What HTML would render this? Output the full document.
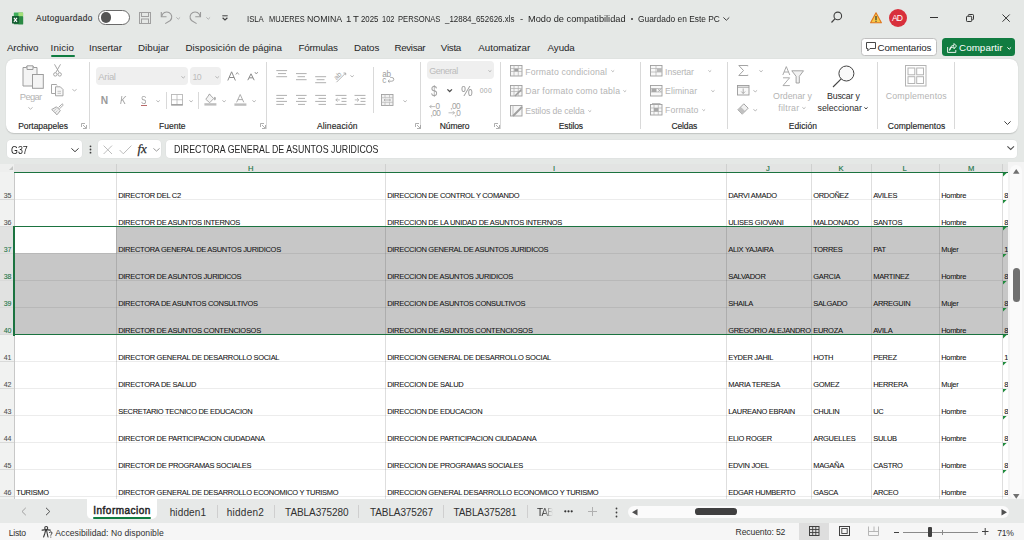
<!DOCTYPE html>
<html><head><meta charset="utf-8"><style>
html,body{margin:0;padding:0;width:1024px;height:540px;overflow:hidden;position:relative;font-family:'Liberation Sans',sans-serif;background:#e5e8e6;}
.t{position:absolute;white-space:nowrap;}
.a{position:absolute;}

.rib{position:absolute;left:6px;top:58.5px;width:1012px;height:74.5px;background:#fff;border-radius:8px;box-shadow:0 0.6px 1.2px rgba(0,0,0,0.16);}
.sep{position:absolute;width:1px;background:#d9d9d9;}
.box{position:absolute;background:#fff;border-radius:4px;box-shadow:0 0 0 0.5px #dcdedd;}
.hl{position:absolute;height:1px;background:rgba(0,0,0,0.075);}
.vl{position:absolute;width:1px;background:rgba(0,0,0,0.13);}
svg{position:absolute;overflow:visible;}

</style></head><body>
<div class="rib"></div>
<div class="sep" style="left:89.0px;top:62px;height:67px"></div>
<div class="sep" style="left:266.0px;top:62px;height:67px"></div>
<div class="sep" style="left:420.0px;top:62px;height:67px"></div>
<div class="sep" style="left:500.0px;top:62px;height:67px"></div>
<div class="sep" style="left:640.0px;top:62px;height:67px"></div>
<div class="sep" style="left:727.0px;top:62px;height:67px"></div>
<div class="sep" style="left:877.0px;top:62px;height:67px"></div>
<div class="sep" style="left:954.0px;top:62px;height:67px"></div>
<div class="sep" style="left:166.0px;top:92px;height:17px"></div>
<div class="sep" style="left:198.0px;top:92px;height:17px"></div>
<div class="sep" style="left:373.0px;top:67px;height:46px"></div>
<div class="box" style="left:7px;top:140px;width:75px;height:18px"></div>
<div class="box" style="left:98px;top:140px;width:63px;height:18px"></div>
<div class="box" style="left:166px;top:140px;width:851px;height:18px"></div>
<div class="a" style="left:14px;top:164px;width:994px;height:8px;background:#e3e4e3"></div>
<div class="a" style="left:0;top:164px;width:14px;height:8px;background:#eeefee"></div>
<div class="a" style="left:116px;top:164px;width:1px;height:8px;background:#cfd0cf"></div>
<div class="a" style="left:385px;top:164px;width:1px;height:8px;background:#cfd0cf"></div>
<div class="a" style="left:726px;top:164px;width:1px;height:8px;background:#cfd0cf"></div>
<div class="a" style="left:811px;top:164px;width:1px;height:8px;background:#cfd0cf"></div>
<div class="a" style="left:871px;top:164px;width:1px;height:8px;background:#cfd0cf"></div>
<div class="a" style="left:939px;top:164px;width:1px;height:8px;background:#cfd0cf"></div>
<div class="a" style="left:1002px;top:164px;width:1px;height:8px;background:#cfd0cf"></div>
<div class="a" style="left:0;top:172px;width:14px;height:327px;background:#f1f2f1"></div>
<div class="a" style="left:14px;top:172px;width:994px;height:327px;background:#fff;overflow:hidden" id="grid">
<div class="a" style="left:0;top:54px;width:994px;height:108px;background:#c7c7c7"></div>
<div class="a" style="left:0;top:54px;width:102px;height:27px;background:#fff"></div>
<div class="hl" style="left:0;top:27px;width:994px"></div>
<div class="hl" style="left:0;top:54px;width:994px"></div>
<div class="hl" style="left:0;top:81px;width:994px"></div>
<div class="hl" style="left:0;top:108px;width:994px"></div>
<div class="hl" style="left:0;top:135px;width:994px"></div>
<div class="hl" style="left:0;top:162px;width:994px"></div>
<div class="hl" style="left:0;top:189px;width:994px"></div>
<div class="hl" style="left:0;top:216px;width:994px"></div>
<div class="hl" style="left:0;top:243px;width:994px"></div>
<div class="hl" style="left:0;top:270px;width:994px"></div>
<div class="hl" style="left:0;top:297px;width:994px"></div>
<div class="hl" style="left:0;top:324px;width:994px"></div>
<div class="vl" style="left:102px;top:0;height:327px"></div>
<div class="vl" style="left:371px;top:0;height:327px"></div>
<div class="vl" style="left:712px;top:0;height:327px"></div>
<div class="vl" style="left:797px;top:0;height:327px"></div>
<div class="vl" style="left:857px;top:0;height:327px"></div>
<div class="vl" style="left:925px;top:0;height:327px"></div>
<div class="vl" style="left:988px;top:0;height:327px"></div>
</div>
<div class="a" style="left:0;top:226px;width:14px;height:108px;background:#e1e2e1"></div>
<div class="a" style="left:0;top:199px;width:14px;height:1px;background:#d9dad9"></div>
<div class="a" style="left:0;top:226px;width:14px;height:1px;background:#d9dad9"></div>
<div class="a" style="left:0;top:253px;width:14px;height:1px;background:#d9dad9"></div>
<div class="a" style="left:0;top:280px;width:14px;height:1px;background:#d9dad9"></div>
<div class="a" style="left:0;top:307px;width:14px;height:1px;background:#d9dad9"></div>
<div class="a" style="left:0;top:334px;width:14px;height:1px;background:#d9dad9"></div>
<div class="a" style="left:0;top:361px;width:14px;height:1px;background:#d9dad9"></div>
<div class="a" style="left:0;top:388px;width:14px;height:1px;background:#d9dad9"></div>
<div class="a" style="left:0;top:415px;width:14px;height:1px;background:#d9dad9"></div>
<div class="a" style="left:0;top:442px;width:14px;height:1px;background:#d9dad9"></div>
<div class="a" style="left:0;top:469px;width:14px;height:1px;background:#d9dad9"></div>
<div class="a" style="left:0;top:496px;width:14px;height:1px;background:#d9dad9"></div>
<div class="a" style="left:14px;top:172px;width:1px;height:327px;background:#c8c8c8"></div>
<div class="a" style="left:14px;top:171.5px;width:994px;height:1.6px;background:#1b7340"></div>
<div class="a" style="left:13px;top:225.6px;width:995px;height:1.8px;background:#1b7340"></div>
<div class="a" style="left:13px;top:333.6px;width:995px;height:1.8px;background:#1b7340"></div>
<div class="a" style="left:13px;top:225.6px;width:2px;height:110px;background:#1b7340"></div>
<div class="a" style="left:1008px;top:162px;width:16px;height:338px;background:#f4f4f4"></div>
<div class="a" style="left:1010px;top:165px;width:12px;height:334px;background:#fafafa;border-radius:6px"></div>
<div class="a" style="left:1013px;top:267.5px;width:6.5px;height:34.5px;background:#707070;border-radius:3.5px"></div>
<div class="a" style="left:0;top:499px;width:1024px;height:23.5px;background:#e7e9e8"></div>
<div class="a" style="left:86.5px;top:499px;width:70px;height:20px;background:#fff;border-radius:0 0 5px 5px"></div>
<div class="a" style="left:93px;top:517px;width:57.5px;height:1.6px;background:#107c41;border-radius:1px"></div>
<div class="a" style="left:216.5px;top:505px;width:1px;height:13px;background:#cfcfcf"></div>
<div class="a" style="left:274.3px;top:505px;width:1px;height:13px;background:#cfcfcf"></div>
<div class="a" style="left:358.4px;top:505px;width:1px;height:13px;background:#cfcfcf"></div>
<div class="a" style="left:443.3px;top:505px;width:1px;height:13px;background:#cfcfcf"></div>
<div class="a" style="left:526.6px;top:505px;width:1px;height:13px;background:#cfcfcf"></div>
<div class="a" style="left:628.4px;top:505.8px;width:380.5px;height:12.5px;background:#fbfbfb;border-radius:6px"></div>
<div class="a" style="left:694.8px;top:508.4px;width:42.7px;height:6.2px;background:#404040;border-radius:3.1px"></div>
<div class="a" style="left:0;top:522.5px;width:1024px;height:17.5px;background:#f6f6f6"></div>
<div class="a" style="left:799.2px;top:522.5px;width:29.8px;height:17.5px;background:#dedede"></div>
<svg style="left:11px;top:11.5px;" width="13" height="13" viewBox="0 0 13 13"><rect x="2.8" y="0.5" width="9.3" height="4.2" rx="0.6" fill="#3fae5c"/><rect x="7.4" y="0.5" width="4.7" height="4.2" fill="#a3df79"/><rect x="2.8" y="4.5" width="9.3" height="7.8" rx="0.6" fill="#1f7d3b"/><rect x="7.4" y="4.5" width="4.7" height="7.8" fill="#2a8a44"/><rect x="1" y="4.1" width="6.9" height="7.5" rx="0.5" fill="#155c33"/><path d="M2.9 5.9 L6 9.8 M6 5.9 L2.9 9.8" stroke="#fff" stroke-width="1.1"/></svg>
<div class="a" style="left:98px;top:10px;width:30px;height:13px;border:1px solid #6a6a6a;border-radius:8px;background:#fff"></div>
<div class="a" style="left:100.5px;top:12px;width:10.6px;height:10.6px;border-radius:50%;background:#555"></div>
<svg style="left:139px;top:12px;" width="12" height="12" viewBox="0 0 12 12"><rect x="0.5" y="0.5" width="11" height="11" fill="none" stroke="#a0a0a0" stroke-width="1"/><rect x="2.5" y="0.5" width="7" height="4" fill="none" stroke="#a0a0a0"/><rect x="2.5" y="7" width="7" height="4.5" fill="none" stroke="#a0a0a0"/></svg>
<svg style="left:160px;top:11px;" width="13" height="14" viewBox="0 0 13 14"><path d="M1.3 1.1 V5.8 H6.5" fill="none" stroke="#9a9a9a" stroke-width="1.1"/><path d="M1.8 5.3 A5 5 0 1 1 10.3 9.5 L5.2 12.6" fill="none" stroke="#9a9a9a" stroke-width="1.1"/></svg>
<svg style="left:176.3px;top:16.5px;" width="4.5" height="2.5" viewBox="0 0 4.5 2.5"><path d="M0.4 0.4 L2.25 2.2 L4.1 0.4" fill="none" stroke="#a8a8a8" stroke-width="0.9"/></svg>
<svg style="left:189px;top:11px;" width="13" height="14" viewBox="0 0 13 14"><path d="M11.5 1.1 V5.8 H6.3" fill="none" stroke="#9a9a9a" stroke-width="1.1"/><path d="M11 5.3 A5 5 0 1 0 2.5 9.5 L7.6 12.6" fill="none" stroke="#9a9a9a" stroke-width="1.1"/></svg>
<svg style="left:206px;top:16.5px;" width="4.5" height="2.5" viewBox="0 0 4.5 2.5"><path d="M0.4 0.4 L2.25 2.2 L4.1 0.4" fill="none" stroke="#a8a8a8" stroke-width="0.9"/></svg>
<svg style="left:221.8px;top:14.5px;" width="6" height="6" viewBox="0 0 6 6"><path d="M0.3 0.8 H5.7" stroke="#404040" stroke-width="1"/><path d="M0.6 2.8 L3 5 L5.4 2.8" fill="none" stroke="#404040" stroke-width="1.2"/></svg>
<svg style="left:723.4px;top:16.5px;" width="6.7" height="3.6" viewBox="0 0 6.7 3.6"><path d="M0.4 0.4 L3.35 3.3000000000000003 L6.3 0.4" fill="none" stroke="#404040" stroke-width="1"/></svg>
<svg style="left:830px;top:11px;" width="13" height="13" viewBox="0 0 13 13"><circle cx="7.8" cy="4.9" r="3.8" fill="none" stroke="#404040" stroke-width="1.1"/><path d="M5.1 7.7 L1.5 11.5" stroke="#404040" stroke-width="1.2"/></svg>
<svg style="left:870px;top:12px;" width="12" height="11.5" viewBox="0 0 12 11.5"><path d="M6 0.8 L11.4 10.7 H0.6 Z" fill="#f7c948" stroke="#e0761d" stroke-width="1.1" stroke-linejoin="round"/><rect x="5.4" y="4" width="1.2" height="4" fill="#333"/><rect x="5.4" y="8.7" width="1.2" height="1.1" fill="#333"/></svg>
<div class="a" style="left:888.9px;top:8.9px;width:18.4px;height:18.4px;border-radius:50%;background:#d8303c"></div>
<div class="a" style="left:930.3px;top:17px;width:7.5px;height:1px;background:#333"></div>
<svg style="left:966px;top:14px;" width="8" height="8" viewBox="0 0 8 8"><rect x="0.5" y="2.3" width="5.2" height="5.2" rx="0.8" fill="none" stroke="#333" stroke-width="1"/><path d="M2.3 1.8 V1.3 Q2.3 0.5 3.1 0.5 H6.7 Q7.5 0.5 7.5 1.3 V4.9 Q7.5 5.7 6.7 5.7 H6.2" fill="none" stroke="#333" stroke-width="1"/></svg>
<svg style="left:1002px;top:13.6px;" width="8.2" height="8.2" viewBox="0 0 8.2 8.2"><path d="M0.5 0.5 L7.7 7.7 M7.7 0.5 L0.5 7.7" stroke="#333" stroke-width="1"/></svg>
<div class="a" style="left:50.5px;top:54.5px;width:24px;height:2px;background:#107c41;border-radius:1px"></div>
<div class="a" style="left:860.5px;top:38.2px;width:74px;height:16.3px;background:#fff;border:0.8px solid #c0c0c0;border-radius:3.5px"></div>
<svg style="left:865.5px;top:42px;" width="11" height="10" viewBox="0 0 11 10"><path d="M0.5 0.5 H9.5 V6.5 H4 L1.8 8.8 V6.5 H0.5 Z" fill="none" stroke="#333" stroke-width="0.9" stroke-linejoin="round"/></svg>
<div class="a" style="left:942.3px;top:38px;width:72.5px;height:18px;background:#117c41;border-radius:3.5px"></div>
<svg style="left:947px;top:42.5px;" width="10" height="10" viewBox="0 0 10 10"><path d="M0.6 4 V9.4 H8.8 V7" fill="none" stroke="#fff" stroke-width="0.9"/><path d="M2.6 7.4 Q3.2 3.8 7 3.8 V5.8 L9.5 3 L7 0.5 V2.3 Q2.9 2.5 2.6 7.4" fill="none" stroke="#fff" stroke-width="0.9" stroke-linejoin="round"/></svg>
<svg style="left:1006.5px;top:47px;" width="4.5" height="2.5" viewBox="0 0 4.5 2.5"><path d="M0.4 0.4 L2.25 2.2 L4.1 0.4" fill="none" stroke="#fff" stroke-width="1"/></svg>
<svg style="left:22px;top:64.5px;" width="22" height="24" viewBox="0 0 22 24"><path d="M1 2.5 H4.5 V1.5 H11.5 V2.5 H15 V21 H1 Z" fill="#f4f4f4" stroke="#9c9c9c" stroke-width="1"/><path d="M5 0.8 H11 V4.5 H5 Z" fill="#f4f4f4" stroke="#9c9c9c" stroke-width="1"/><rect x="10.5" y="9.5" width="10.8" height="13.8" fill="#f4f4f4" stroke="#9c9c9c" stroke-width="1"/></svg>
<svg style="left:27.8px;top:107px;" width="5" height="2.5" viewBox="0 0 5 2.5"><path d="M0.4 0.4 L2.5 2.2 L4.6 0.4" fill="none" stroke="#b0b0b0" stroke-width="0.9"/></svg>
<svg style="left:52.5px;top:64.3px;" width="9" height="12.5" viewBox="0 0 9 12.5"><path d="M1.5 0.3 L6.2 8.5 M7.5 0.3 L2.8 8.5" stroke="#9c9c9c" stroke-width="0.9"/><circle cx="2.3" cy="10.4" r="1.7" fill="none" stroke="#9c9c9c" stroke-width="0.9"/><circle cx="6.7" cy="10.4" r="1.7" fill="none" stroke="#9c9c9c" stroke-width="0.9"/></svg>
<svg style="left:50.7px;top:83.7px;" width="13" height="12.5" viewBox="0 0 13 12.5"><path d="M4 9.5 H0.5 V0.5 H5.5 L6 1.5" fill="none" stroke="#9c9c9c" stroke-width="0.9"/><path d="M4.5 2.8 H9.3 L12 5.5 V11.8 H4.5 Z" fill="#f7f7f7" stroke="#9c9c9c" stroke-width="0.9"/><path d="M6.5 7.3 H10 M6.5 9.3 H10" stroke="#b4b4b4" stroke-width="0.8"/></svg>
<svg style="left:72.2px;top:89px;" width="5" height="2.2" viewBox="0 0 5 2.2"><path d="M0.4 0.4 L2.5 1.9000000000000001 L4.6 0.4" fill="none" stroke="#b0b0b0" stroke-width="0.9"/></svg>
<svg style="left:51px;top:102.8px;" width="12.5" height="12.5" viewBox="0 0 12.5 12.5"><path d="M7.5 4.5 L10.6 1.4 Q11.6 0.6 12 1.5 Q12.2 2.1 11.5 2.8 L8.5 5.8" fill="none" stroke="#9c9c9c" stroke-width="0.9"/><path d="M5.5 3.8 L9.3 7.6 L6 11.8 L0.7 6.5 Z" fill="#f0f0f0" stroke="#9c9c9c" stroke-width="0.9" stroke-linejoin="round"/><path d="M2.5 8.3 L5.5 5.5 M4 10 L6.5 7.5" stroke="#b4b4b4" stroke-width="0.7"/></svg>
<svg style="left:81px;top:123.3px;" width="6" height="6" viewBox="0 0 6 6"><path d="M0.5 4 V0.5 H4" fill="none" stroke="#9a9a9a" stroke-width="0.8"/><path d="M5.5 2 V5.5 H2 M2 2 L5 5" fill="none" stroke="#9a9a9a" stroke-width="0.8"/></svg>
<svg style="left:260px;top:123.3px;" width="6" height="6" viewBox="0 0 6 6"><path d="M0.5 4 V0.5 H4" fill="none" stroke="#9a9a9a" stroke-width="0.8"/><path d="M5.5 2 V5.5 H2 M2 2 L5 5" fill="none" stroke="#9a9a9a" stroke-width="0.8"/></svg>
<svg style="left:414.6px;top:123.3px;" width="6" height="6" viewBox="0 0 6 6"><path d="M0.5 4 V0.5 H4" fill="none" stroke="#9a9a9a" stroke-width="0.8"/><path d="M5.5 2 V5.5 H2 M2 2 L5 5" fill="none" stroke="#9a9a9a" stroke-width="0.8"/></svg>
<svg style="left:494px;top:123.3px;" width="6" height="6" viewBox="0 0 6 6"><path d="M0.5 4 V0.5 H4" fill="none" stroke="#9a9a9a" stroke-width="0.8"/><path d="M5.5 2 V5.5 H2 M2 2 L5 5" fill="none" stroke="#9a9a9a" stroke-width="0.8"/></svg>
<div class="a" style="left:96.2px;top:67.3px;width:91.8px;height:18.1px;background:#efefef;border-radius:4px"></div>
<div class="a" style="left:190.1px;top:67.3px;width:31.3px;height:18.1px;background:#efefef;border-radius:4px"></div>
<svg style="left:181.3px;top:75.5px;" width="4.5" height="2.3" viewBox="0 0 4.5 2.3"><path d="M0.4 0.4 L2.25 1.9999999999999998 L4.1 0.4" fill="none" stroke="#b0b0b0" stroke-width="0.9"/></svg>
<svg style="left:215px;top:75.5px;" width="4.5" height="2.3" viewBox="0 0 4.5 2.3"><path d="M0.4 0.4 L2.25 1.9999999999999998 L4.1 0.4" fill="none" stroke="#b0b0b0" stroke-width="0.9"/></svg>
<svg style="left:155.9px;top:99.5px;" width="4.2" height="2.2" viewBox="0 0 4.2 2.2"><path d="M0.4 0.4 L2.1 1.9000000000000001 L3.8000000000000003 0.4" fill="none" stroke="#b0b0b0" stroke-width="0.9"/></svg>
<svg style="left:170.9px;top:94.4px;" width="12" height="11.5" viewBox="0 0 12 11.5"><rect x="0.5" y="0.5" width="11" height="10.5" fill="none" stroke="#b8b8b8" stroke-width="0.9"/><path d="M6 0.5 V11 M0.5 5.75 H11.5" stroke="#b8b8b8" stroke-width="0.8"/><path d="M0.3 10.8 H11.7" stroke="#9a9a9a" stroke-width="1.3"/></svg>
<svg style="left:189.1px;top:99.5px;" width="4.2" height="2.2" viewBox="0 0 4.2 2.2"><path d="M0.4 0.4 L2.1 1.9000000000000001 L3.8000000000000003 0.4" fill="none" stroke="#b0b0b0" stroke-width="0.9"/></svg>
<svg style="left:204px;top:93.3px;" width="13" height="13" viewBox="0 0 13 13"><path d="M1.8 6.3 L5.5 1.2 L9.6 5.6 L5.7 9.7 Z" fill="#f4f4f4" stroke="#a4a4a4" stroke-width="0.9" stroke-linejoin="round"/><path d="M4.5 2.5 Q5.3 0 6.5 1.8" fill="none" stroke="#a4a4a4" stroke-width="0.8"/><ellipse cx="10.8" cy="5.6" rx="1.1" ry="1.8" fill="#b0b0b0"/><rect x="0.4" y="10.2" width="12" height="2.4" fill="#bdbdbd"/></svg>
<svg style="left:221.8px;top:99.5px;" width="4.2" height="2.2" viewBox="0 0 4.2 2.2"><path d="M0.4 0.4 L2.1 1.9000000000000001 L3.8000000000000003 0.4" fill="none" stroke="#b0b0b0" stroke-width="0.9"/></svg>
<svg style="left:234.3px;top:94.2px;" width="12.5" height="12.5" viewBox="0 0 12.5 12.5"><path d="M2.6 8.3 L6.2 0.5 L9.8 8.3 M3.9 5.6 H8.5" fill="none" stroke="#a4a4a4" stroke-width="0.9"/><rect x="0.4" y="9.4" width="12" height="2.4" fill="#bdbdbd"/></svg>
<svg style="left:252.2px;top:99.5px;" width="4.2" height="2.2" viewBox="0 0 4.2 2.2"><path d="M0.4 0.4 L2.1 1.9000000000000001 L3.8000000000000003 0.4" fill="none" stroke="#b0b0b0" stroke-width="0.9"/></svg>
<svg style="left:226.8px;top:70.5px;" width="12.5" height="10" viewBox="0 0 12.5 10"><path d="M0.8 9.5 L4.6 0.8 L8.4 9.5 M2.2 6.5 H7" fill="none" stroke="#8a8a8a" stroke-width="1"/><path d="M8.8 3.5 L10.3 1.5 L11.8 3.5" fill="none" stroke="#8a8a8a" stroke-width="0.8"/></svg>
<svg style="left:247px;top:70.8px;" width="12" height="9.5" viewBox="0 0 12 9.5"><path d="M0.8 9.2 L4 2.8 L7.2 9.2 M2 6.8 H6" fill="none" stroke="#8a8a8a" stroke-width="1"/><path d="M7.8 1 L9.3 3 L10.8 1" fill="none" stroke="#8a8a8a" stroke-width="0.8"/></svg>
<svg style="left:276px;top:70px;" width="14" height="14" viewBox="0 0 14 14"><path d="M0.3 0.6 H11.1" stroke="#b0b0b0" stroke-width="1"/><path d="M2 3.6 H10" stroke="#b0b0b0" stroke-width="1"/><path d="M0.3 6.7 H11.1" stroke="#b0b0b0" stroke-width="1"/></svg>
<svg style="left:296px;top:72.5px;" width="14" height="14" viewBox="0 0 14 14"><path d="M0 0.6 H10.6" stroke="#b0b0b0" stroke-width="1"/><path d="M1.5 3.7 H9" stroke="#b0b0b0" stroke-width="1"/><path d="M0 6.7 H10.6" stroke="#b0b0b0" stroke-width="1"/></svg>
<svg style="left:315px;top:75.5px;" width="14" height="14" viewBox="0 0 14 14"><path d="M0.2 0.7 H11.1" stroke="#b0b0b0" stroke-width="1"/><path d="M1.6 3.7 H9.5" stroke="#b0b0b0" stroke-width="1"/><path d="M0.2 6.7 H11.1" stroke="#b0b0b0" stroke-width="1"/></svg>
<svg style="left:276px;top:95px;" width="14" height="14" viewBox="0 0 14 14"><path d="M0.3 0.4 H11" stroke="#b0b0b0" stroke-width="1"/><path d="M0.3 3.4 H8" stroke="#b0b0b0" stroke-width="1"/><path d="M0.3 6.4 H11" stroke="#b0b0b0" stroke-width="1"/><path d="M0.3 9.4 H8" stroke="#b0b0b0" stroke-width="1"/></svg>
<svg style="left:296px;top:95px;" width="14" height="14" viewBox="0 0 14 14"><path d="M0 0.4 H10.6" stroke="#b0b0b0" stroke-width="1"/><path d="M2 3.4 H9" stroke="#b0b0b0" stroke-width="1"/><path d="M0 6.4 H10.6" stroke="#b0b0b0" stroke-width="1"/><path d="M2 9.4 H9" stroke="#b0b0b0" stroke-width="1"/></svg>
<svg style="left:315px;top:95px;" width="14" height="14" viewBox="0 0 14 14"><path d="M0.2 0.4 H11" stroke="#b0b0b0" stroke-width="1"/><path d="M3.5 3.4 H11" stroke="#b0b0b0" stroke-width="1"/><path d="M0.2 6.4 H11" stroke="#b0b0b0" stroke-width="1"/><path d="M3.5 9.4 H11" stroke="#b0b0b0" stroke-width="1"/></svg>
<svg style="left:334.5px;top:95px;" width="13" height="11" viewBox="0 0 13 11"><path d="M0.5 0.4 H11.5 M6.5 3.4 H11.5 M6.5 6.4 H11.5 M0.5 9.4 H11.5" stroke="#b0b0b0" stroke-width="1"/><path d="M4.8 4.9 H0.8 M2.6 3.2 L0.8 4.9 L2.6 6.6" fill="none" stroke="#a8a8a8" stroke-width="0.8"/></svg>
<svg style="left:354px;top:95px;" width="13" height="11" viewBox="0 0 13 11"><path d="M0.5 0.4 H11.5 M6.5 3.4 H11.5 M6.5 6.4 H11.5 M0.5 9.4 H11.5" stroke="#b0b0b0" stroke-width="1"/><path d="M0.8 4.9 H4.8 M3 3.2 L4.8 4.9 L3 6.6" fill="none" stroke="#a8a8a8" stroke-width="0.8"/></svg>
<svg style="left:334.2px;top:69.5px;" width="13" height="13" viewBox="0 0 13 13"><text x="0" y="8" font-family="Liberation Sans" font-size="7" fill="#a0a0a0" transform="rotate(-45 4 6)">ab</text><path d="M2.5 12.2 L11.5 3.2 M9.5 3 L11.7 3 L11.7 5.2" fill="none" stroke="#a8a8a8" stroke-width="0.9"/></svg>
<svg style="left:350.4px;top:75.3px;" width="4.2" height="2.2" viewBox="0 0 4.2 2.2"><path d="M0.4 0.4 L2.1 1.9000000000000001 L3.8000000000000003 0.4" fill="none" stroke="#b0b0b0" stroke-width="0.9"/></svg>
<svg style="left:382.3px;top:69.8px;" width="14" height="14" viewBox="0 0 14 14"><text x="0.2" y="6.6" font-family="Liberation Sans" font-size="8.2" fill="#9c9c9c" letter-spacing="-0.3">ab</text><text x="0.2" y="12.6" font-family="Liberation Sans" font-size="8.2" fill="#9c9c9c">c</text><path d="M6 11.2 H9.8 Q11.8 11.2 11.8 9.3 Q11.8 7.5 9.8 7.5 H8.3 M7.5 9.8 L6 11.2 L7.5 12.6" fill="none" stroke="#a0a0a0" stroke-width="0.9"/></svg>
<svg style="left:381px;top:94px;" width="12.5" height="12" viewBox="0 0 12.5 12"><rect x="0.5" y="0.5" width="11.5" height="11" fill="#f2f2f2" stroke="#a0a0a0" stroke-width="0.9"/><path d="M0.5 3.7 H12 M0.5 8.3 H12 M4 0.5 V3.7 M8.5 0.5 V3.7 M4 8.3 V11.5 M8.5 8.3 V11.5" stroke="#b4b4b4" stroke-width="0.7"/><path d="M3 6 H9.5 M4.3 5 L3 6 L4.3 7 M8.2 5 L9.5 6 L8.2 7" fill="none" stroke="#a0a0a0" stroke-width="0.7"/></svg>
<svg style="left:403.2px;top:99.5px;" width="4.2" height="2.2" viewBox="0 0 4.2 2.2"><path d="M0.4 0.4 L2.1 1.9000000000000001 L3.8000000000000003 0.4" fill="none" stroke="#b0b0b0" stroke-width="0.9"/></svg>
<div class="a" style="left:426.5px;top:61.4px;width:67.8px;height:17.8px;background:#efefef;border-radius:4px"></div>
<svg style="left:488px;top:69.5px;" width="3.8" height="2" viewBox="0 0 3.8 2"><path d="M0.4 0.4 L1.9 1.7 L3.4 0.4" fill="none" stroke="#b0b0b0" stroke-width="0.9"/></svg>
<svg style="left:446.7px;top:89px;" width="5.4" height="2.9" viewBox="0 0 5.4 2.9"><path d="M0.4 0.4 L2.7 2.6 L5.0 0.4" fill="none" stroke="#505050" stroke-width="1.3"/></svg>
<svg style="left:428.5px;top:102.5px;" width="15" height="14" viewBox="0 0 15 14"><text x="6.6" y="6.3" font-family="Liberation Sans" font-size="8.2" fill="#a0a0a0">0</text><text x="1.5" y="12.8" font-family="Liberation Sans" font-size="8.2" fill="#a0a0a0" letter-spacing="-0.5">,00</text><path d="M6.3 3.6 H0.8 M2.5 1.9 L0.8 3.6 L2.5 5.3" fill="none" stroke="#a8a8a8" stroke-width="0.8"/></svg>
<svg style="left:447.8px;top:102.5px;" width="15" height="14" viewBox="0 0 15 14"><text x="2.2" y="6.3" font-family="Liberation Sans" font-size="8.2" fill="#a0a0a0" letter-spacing="-0.5">,00</text><text x="6.6" y="12.8" font-family="Liberation Sans" font-size="8.2" fill="#a0a0a0" letter-spacing="-0.5">,0</text><path d="M0.5 9.8 H6.5 M4.8 8.1 L6.5 9.8 L4.8 11.5" fill="none" stroke="#a8a8a8" stroke-width="0.8"/></svg>
<svg style="left:509.7px;top:64.9px;" width="13" height="12" viewBox="0 0 13 12"><rect x="0.5" y="0.5" width="11.5" height="10.5" fill="#f5f5f5" stroke="#9e9e9e" stroke-width="0.9"/><path d="M0.5 3.5 H12 M0.5 6.5 H12 M4 0.5 V11 M8.3 0.5 V11" stroke="#b0b0b0" stroke-width="0.7"/><rect x="4.3" y="3.8" width="3.8" height="2.5" fill="#9e9e9e"/></svg>
<svg style="left:509.7px;top:84.9px;" width="13" height="12" viewBox="0 0 13 12"><rect x="0.5" y="0.5" width="11.5" height="10.5" fill="#f5f5f5" stroke="#9e9e9e" stroke-width="0.9"/><path d="M0.5 3.5 H12 M0.5 6.5 H12 M4 0.5 V11 M8.3 0.5 V11" stroke="#b0b0b0" stroke-width="0.7"/><path d="M5 11 L11.5 4.5" stroke="#9e9e9e" stroke-width="1.6"/></svg>
<svg style="left:509.7px;top:104.5px;" width="13" height="12" viewBox="0 0 13 12"><rect x="0.5" y="0.5" width="11.5" height="10.5" fill="#f5f5f5" stroke="#9e9e9e" stroke-width="0.9"/><path d="M3 0.5 V11" stroke="#b0b0b0" stroke-width="0.7"/><path d="M3 11 L12 2" stroke="#a0a0a0" stroke-width="2"/></svg>
<svg style="left:611px;top:70.3px;" width="3.6" height="2" viewBox="0 0 3.6 2"><path d="M0.4 0.4 L1.8 1.7 L3.2 0.4" fill="none" stroke="#b0b0b0" stroke-width="0.9"/></svg>
<svg style="left:623px;top:89.8px;" width="3.6" height="2" viewBox="0 0 3.6 2"><path d="M0.4 0.4 L1.8 1.7 L3.2 0.4" fill="none" stroke="#b0b0b0" stroke-width="0.9"/></svg>
<svg style="left:588.2px;top:109.5px;" width="3.6" height="2" viewBox="0 0 3.6 2"><path d="M0.4 0.4 L1.8 1.7 L3.2 0.4" fill="none" stroke="#b0b0b0" stroke-width="0.9"/></svg>
<svg style="left:649.8px;top:65px;" width="13" height="11.5" viewBox="0 0 13 11.5"><rect x="0.5" y="0.5" width="11.5" height="10.5" fill="#f8f8f8" stroke="#9e9e9e" stroke-width="0.9"/><path d="M0.5 3.5 H12 M0.5 7 H12 M6 0.5 V11" stroke="#b0b0b0" stroke-width="0.7"/><rect x="7" y="3.5" width="5" height="3.5" fill="#b8b8b8"/></svg>
<svg style="left:649.8px;top:84.7px;" width="13" height="11.5" viewBox="0 0 13 11.5"><rect x="0.5" y="0.5" width="11.5" height="10.5" fill="#f8f8f8" stroke="#9e9e9e" stroke-width="0.9"/><path d="M0.5 3.5 H12 M0.5 7 H12" stroke="#b0b0b0" stroke-width="0.7"/><rect x="1.5" y="3.5" width="5" height="3.5" fill="#a8a8a8"/><path d="M8 3.8 L11 6.8 M11 3.8 L8 6.8" stroke="#9e9e9e" stroke-width="0.8"/></svg>
<svg style="left:649.8px;top:103.3px;" width="13" height="12.5" viewBox="0 0 13 12.5"><rect x="0.5" y="1.5" width="11.5" height="10.5" fill="#f8f8f8" stroke="#9e9e9e" stroke-width="0.9"/><path d="M0.5 5 H12 M0.5 8.5 H12 M4 1.5 V12 M8.3 1.5 V12" stroke="#b0b0b0" stroke-width="0.7"/><rect x="4" y="5" width="4.3" height="3.5" fill="#a8a8a8"/><path d="M2 0.5 H10.5" stroke="#9e9e9e" stroke-width="0.7"/></svg>
<svg style="left:707.6px;top:70px;" width="3.6" height="2" viewBox="0 0 3.6 2"><path d="M0.4 0.4 L1.8 1.7 L3.2 0.4" fill="none" stroke="#b0b0b0" stroke-width="0.9"/></svg>
<svg style="left:710.7px;top:89.5px;" width="3.9" height="2" viewBox="0 0 3.9 2"><path d="M0.4 0.4 L1.95 1.7 L3.5 0.4" fill="none" stroke="#b0b0b0" stroke-width="0.9"/></svg>
<svg style="left:701.6px;top:109px;" width="3.5" height="2" viewBox="0 0 3.5 2"><path d="M0.4 0.4 L1.75 1.7 L3.1 0.4" fill="none" stroke="#b0b0b0" stroke-width="0.9"/></svg>
<svg style="left:738px;top:65px;" width="10.5" height="11" viewBox="0 0 10.5 11"><path d="M9.8 1.3 V0.5 H0.8 L5.5 5.5 L0.8 10.5 H9.8 V9.7" fill="none" stroke="#9a9a9a" stroke-width="0.9"/></svg>
<svg style="left:758.7px;top:70.3px;" width="4.1" height="2.1" viewBox="0 0 4.1 2.1"><path d="M0.4 0.4 L2.05 1.8 L3.6999999999999997 0.4" fill="none" stroke="#b0b0b0" stroke-width="0.9"/></svg>
<svg style="left:736.9px;top:85px;" width="12.5" height="10.5" viewBox="0 0 12.5 10.5"><rect x="0.5" y="0.5" width="11.5" height="9.5" fill="#f8f8f8" stroke="#9a9a9a" stroke-width="0.9"/><path d="M0.5 2.2 H12" stroke="#9a9a9a" stroke-width="0.9"/><path d="M6.2 3.5 V8.5 M4.2 6.5 L6.2 8.5 L8.2 6.5" fill="none" stroke="#9a9a9a" stroke-width="0.8"/></svg>
<svg style="left:753.1px;top:89.5px;" width="4.5" height="2.1" viewBox="0 0 4.5 2.1"><path d="M0.4 0.4 L2.25 1.8 L4.1 0.4" fill="none" stroke="#b0b0b0" stroke-width="0.9"/></svg>
<svg style="left:736.9px;top:103.3px;" width="12" height="12" viewBox="0 0 12 12"><path d="M6.8 0.8 L11.2 5.2 L5.2 11.2 L0.8 6.8 Z" fill="#f0f0f0" stroke="#9a9a9a" stroke-width="0.9" stroke-linejoin="round"/><path d="M3.5 4.2 L7.8 8.5" stroke="#9a9a9a" stroke-width="0.8"/><path d="M0.8 6.8 L3.5 4.2 L7.8 8.5 L5.2 11.2 Z" fill="#c0c0c0"/></svg>
<svg style="left:753.1px;top:108.5px;" width="4.5" height="2.1" viewBox="0 0 4.5 2.1"><path d="M0.4 0.4 L2.25 1.8 L4.1 0.4" fill="none" stroke="#b0b0b0" stroke-width="0.9"/></svg>
<svg style="left:781.5px;top:65.5px;" width="23" height="21" viewBox="0 0 23 21"><path d="M0.8 9 L4.3 0.6 L7.8 9 M2.1 6 H6.5" fill="none" stroke="#a0a0a0" stroke-width="0.9"/><path d="M1 11.8 H7.6 L1 19.6 H7.8" fill="none" stroke="#a0a0a0" stroke-width="0.9"/><path d="M9.8 4.8 H21.5 L17.3 10.3 V17 H14.1 V10.3 Z" fill="#f2f2f2" stroke="#9a9a9a" stroke-width="0.9" stroke-linejoin="round"/></svg>
<svg style="left:802.2px;top:106.5px;" width="3.9" height="2" viewBox="0 0 3.9 2"><path d="M0.4 0.4 L1.95 1.7 L3.5 0.4" fill="none" stroke="#b0b0b0" stroke-width="0.9"/></svg>
<svg style="left:831.5px;top:64.5px;" width="23" height="23" viewBox="0 0 23 23"><circle cx="14.4" cy="8.5" r="7.5" fill="#fafafa" stroke="#444" stroke-width="1"/><path d="M9.2 13.9 L1 22" stroke="#444" stroke-width="1.1"/></svg>
<svg style="left:864px;top:107.3px;" width="4" height="2.2" viewBox="0 0 4 2.2"><path d="M0.4 0.4 L2.0 1.9000000000000001 L3.6 0.4" fill="none" stroke="#404040" stroke-width="1"/></svg>
<svg style="left:905.3px;top:65.1px;" width="21.5" height="21.5" viewBox="0 0 21.5 21.5"><rect x="0.5" y="0.5" width="20.5" height="20.5" fill="none" stroke="#b4b4b4" stroke-width="1"/><rect x="3" y="3" width="6.8" height="6.8" fill="none" stroke="#b4b4b4" stroke-width="1"/><rect x="11.7" y="3" width="6.8" height="6.8" fill="none" stroke="#b4b4b4" stroke-width="1"/><rect x="3" y="11.7" width="6.8" height="6.8" fill="none" stroke="#b4b4b4" stroke-width="1"/><rect x="11.7" y="11.7" width="6.8" height="6.8" fill="none" stroke="#b4b4b4" stroke-width="1"/></svg>
<svg style="left:1003.5px;top:120.5px;" width="7" height="3.8" viewBox="0 0 7 3.8"><path d="M0.4 0.4 L3.5 3.5 L6.6 0.4" fill="none" stroke="#404040" stroke-width="1"/></svg>
<svg style="left:70.5px;top:148px;" width="8" height="4" viewBox="0 0 8 4"><path d="M0.4 0.4 L4.0 3.7 L7.6 0.4" fill="none" stroke="#404040" stroke-width="1"/></svg>
<svg style="left:88.5px;top:144.5px;" width="3" height="9" viewBox="0 0 3 9"><circle cx="1.5" cy="1.3" r="0.9" fill="#404040"/><circle cx="1.5" cy="4.5" r="0.9" fill="#404040"/><circle cx="1.5" cy="7.7" r="0.9" fill="#404040"/></svg>
<svg style="left:102.5px;top:144.5px;" width="10" height="9.5" viewBox="0 0 10 9.5"><path d="M0.6 0.6 L9 9 M9 0.6 L0.6 9" stroke="#b4b4b4" stroke-width="0.9"/></svg>
<svg style="left:118.5px;top:144.5px;" width="13" height="9.5" viewBox="0 0 13 9.5"><path d="M0.6 5 L4.3 8.8 L12.4 0.6" fill="none" stroke="#b4b4b4" stroke-width="0.9"/></svg>
<div class="t" style="left:137.6px;top:140.6px;font-family:'Liberation Serif',serif;font-style:italic;font-size:13px;line-height:15px;color:#2a2a2a;letter-spacing:-0.1px;-webkit-text-stroke:0.25px #2a2a2a">fx</div>
<svg style="left:152.8px;top:147.5px;" width="7" height="3.4" viewBox="0 0 7 3.4"><path d="M0.4 0.4 L3.5 3.1 L6.6 0.4" fill="none" stroke="#808080" stroke-width="0.8"/></svg>
<svg style="left:1007.2px;top:146.3px;" width="7.4" height="3.8" viewBox="0 0 7.4 3.8"><path d="M0.4 0.4 L3.7 3.5 L7.0 0.4" fill="none" stroke="#505050" stroke-width="1.1"/></svg>
<svg style="left:1002.5px;top:172.8px;" width="4" height="4" viewBox="0 0 4 4"><path d="M0 0 H3.6 L0 3.6 Z" fill="#1e8a3c"/></svg>
<svg style="left:1002.5px;top:199.8px;" width="4" height="4" viewBox="0 0 4 4"><path d="M0 0 H3.6 L0 3.6 Z" fill="#1e8a3c"/></svg>
<svg style="left:1002.5px;top:226.8px;" width="4" height="4" viewBox="0 0 4 4"><path d="M0 0 H3.6 L0 3.6 Z" fill="#1e8a3c"/></svg>
<svg style="left:1002.5px;top:253.8px;" width="4" height="4" viewBox="0 0 4 4"><path d="M0 0 H3.6 L0 3.6 Z" fill="#1e8a3c"/></svg>
<svg style="left:1002.5px;top:280.8px;" width="4" height="4" viewBox="0 0 4 4"><path d="M0 0 H3.6 L0 3.6 Z" fill="#1e8a3c"/></svg>
<svg style="left:1002.5px;top:307.8px;" width="4" height="4" viewBox="0 0 4 4"><path d="M0 0 H3.6 L0 3.6 Z" fill="#1e8a3c"/></svg>
<svg style="left:1002.5px;top:334.8px;" width="4" height="4" viewBox="0 0 4 4"><path d="M0 0 H3.6 L0 3.6 Z" fill="#1e8a3c"/></svg>
<svg style="left:1002.5px;top:361.8px;" width="4" height="4" viewBox="0 0 4 4"><path d="M0 0 H3.6 L0 3.6 Z" fill="#1e8a3c"/></svg>
<svg style="left:1002.5px;top:388.8px;" width="4" height="4" viewBox="0 0 4 4"><path d="M0 0 H3.6 L0 3.6 Z" fill="#1e8a3c"/></svg>
<svg style="left:1002.5px;top:415.8px;" width="4" height="4" viewBox="0 0 4 4"><path d="M0 0 H3.6 L0 3.6 Z" fill="#1e8a3c"/></svg>
<svg style="left:1002.5px;top:442.8px;" width="4" height="4" viewBox="0 0 4 4"><path d="M0 0 H3.6 L0 3.6 Z" fill="#1e8a3c"/></svg>
<svg style="left:1002.5px;top:469.8px;" width="4" height="4" viewBox="0 0 4 4"><path d="M0 0 H3.6 L0 3.6 Z" fill="#1e8a3c"/></svg>
<svg style="left:21px;top:506.8px;" width="6" height="9" viewBox="0 0 6 9"><path d="M4.8 0.8 L1 4.5 L4.8 8.2" fill="none" stroke="#a0a0a0" stroke-width="1"/></svg>
<svg style="left:45.3px;top:506.8px;" width="6" height="9" viewBox="0 0 6 9"><path d="M1 0.8 L4.8 4.5 L1 8.2" fill="none" stroke="#505050" stroke-width="1"/></svg>
<svg style="left:563.7px;top:510px;" width="9" height="3" viewBox="0 0 9 3"><circle cx="1.3" cy="1.3" r="1.1" fill="#333"/><circle cx="4.5" cy="1.3" r="1.1" fill="#333"/><circle cx="7.7" cy="1.3" r="1.1" fill="#333"/></svg>
<svg style="left:587.6px;top:507px;" width="9" height="9" viewBox="0 0 9 9"><path d="M4.5 0 V9 M0 4.5 H9" stroke="#b0b0b0" stroke-width="1"/></svg>
<svg style="left:614.5px;top:506.5px;" width="3" height="11" viewBox="0 0 3 11"><circle cx="1.5" cy="1.5" r="0.9" fill="#404040"/><circle cx="1.5" cy="5.5" r="0.9" fill="#404040"/><circle cx="1.5" cy="9.5" r="0.9" fill="#404040"/></svg>
<svg style="left:632px;top:509px;" width="6" height="6.5" viewBox="0 0 6 6.5"><path d="M5.5 0 V6.5 L0 3.25 Z" fill="#505050"/></svg>
<svg style="left:1001px;top:509px;" width="6" height="6.5" viewBox="0 0 6 6.5"><path d="M0.5 0 V6.5 L6 3.25 Z" fill="#505050"/></svg>
<svg style="left:1012.8px;top:168.8px;" width="6.5" height="5" viewBox="0 0 6.5 5"><path d="M0 4.8 L3.25 0 L6.5 4.8 Z" fill="#707070"/></svg>
<svg style="left:1012.8px;top:493.5px;" width="6.5" height="5" viewBox="0 0 6.5 5"><path d="M0 0 L3.25 4.8 L6.5 0 Z" fill="#707070"/></svg>
<svg style="left:40.5px;top:524.5px;" width="13" height="14" viewBox="0 0 13 14"><circle cx="5.2" cy="3" r="1.5" fill="none" stroke="#383838" stroke-width="1.1"/><path d="M1.2 5.2 Q5.2 4.2 9.2 5.2" fill="none" stroke="#383838" stroke-width="1.3" stroke-linecap="round"/><path d="M4.6 5.3 L3.8 8.5 L2.6 12 M5.6 5.3 L6.2 8.5 L7 12" fill="none" stroke="#383838" stroke-width="1.1" stroke-linecap="round"/><path d="M8.4 8 Q8.6 6.8 9.8 6.8 Q11 6.8 11 8 Q11 8.9 10 9.5 L9.8 10.6" fill="none" stroke="#383838" stroke-width="1"/><circle cx="9.8" cy="12" r="0.6" fill="#383838"/></svg>
<svg style="left:808.5px;top:526.4px;" width="10.5" height="10" viewBox="0 0 10.5 10"><rect x="0.5" y="0.5" width="9.5" height="9" fill="none" stroke="#404040" stroke-width="1"/><path d="M3.7 0.5 V9.5 M6.8 0.5 V9.5 M0.5 3.5 H10 M0.5 6.5 H10" stroke="#404040" stroke-width="0.9"/></svg>
<svg style="left:838.6px;top:526.4px;" width="11" height="10" viewBox="0 0 11 10"><rect x="0.5" y="0.5" width="10" height="9" fill="none" stroke="#404040" stroke-width="1"/><rect x="2.8" y="2.5" width="5.4" height="5" fill="none" stroke="#404040" stroke-width="0.9"/></svg>
<svg style="left:868.3px;top:526.4px;" width="11" height="10" viewBox="0 0 11 10"><path d="M0.5 0.5 V9.5 H10.5 V0.5 M0.5 5.5 H10.5 M6 0.5 V5.5" fill="none" stroke="#b0b0b0" stroke-width="0.9"/></svg>
<div class="a" style="left:893.5px;top:531.5px;width:5.7px;height:1px;background:#404040"></div>
<div class="a" style="left:903px;top:531.5px;width:74.8px;height:1px;background:#8a8a8a"></div>
<div class="a" style="left:927.6px;top:526.5px;width:4.6px;height:10px;background:#404040;border-radius:1px"></div>
<div class="a" style="left:941.5px;top:529.5px;width:1px;height:5px;background:#8a8a8a"></div>
<svg style="left:981.7px;top:528.3px;" width="6.5" height="7" viewBox="0 0 6.5 7"><path d="M3.2 0 V7 M0 3.5 H6.5" stroke="#404040" stroke-width="1"/></svg>
<div class="a" style="left:141.2px;top:104.5px;width:5.8px;height:0.9px;background:#b86a6a"></div>
<div class="a" style="left:630.5px;top:17.5px;width:2.4px;height:2.4px;border-radius:50%;background:#333"></div>
<svg style="left:8.5px;top:165.8px;" width="4.5" height="4.5" viewBox="0 0 4.5 4.5"><path d="M4 0 V4 H0 Z" fill="#c4c6c4"/></svg>
<div class="t tx" id="t0" style="left:36.10px;top:14.19px;font-size:8.3px;line-height:9.27px;color:#2b2b2b;letter-spacing:0.387px;-webkit-text-stroke:0.12px currentColor;">Autoguardado</div>
<div class="t tx" id="t1" style="left:247.00px;top:14.21px;font-size:9.6px;line-height:10.72px;color:#262626;transform:scaleX(0.8072);transform-origin:0 0;">ISLA</div>
<div class="t tx" id="t2" style="left:268.60px;top:14.21px;font-size:9.6px;line-height:10.72px;color:#262626;transform:scaleX(0.7766);transform-origin:0 0;">MUJERES</div>
<div class="t tx" id="t3" style="left:307.20px;top:14.21px;font-size:9.6px;line-height:10.72px;color:#262626;transform:scaleX(0.9173);transform-origin:0 0;">NOMINA</div>
<div class="t tx" id="t4" style="left:361.30px;top:14.21px;font-size:9.6px;line-height:10.72px;color:#262626;transform:scaleX(0.8152);transform-origin:0 0;">2025</div>
<div class="t tx" id="t5" style="left:382.00px;top:14.21px;font-size:9.6px;line-height:10.72px;color:#262626;transform:scaleX(0.7742);transform-origin:0 0;">102</div>
<div class="t tx" id="t6" style="left:397.80px;top:14.21px;font-size:9.6px;line-height:10.72px;color:#262626;transform:scaleX(0.7951);transform-origin:0 0;">PERSONAS</div>
<div class="t tx" id="t7" style="left:445.40px;top:14.21px;font-size:9.6px;line-height:10.72px;color:#262626;transform:scaleX(0.8285);transform-origin:0 0;">_12884_652626.xls</div>
<div class="t tx" id="t8" style="left:528.00px;top:14.21px;font-size:9.6px;line-height:10.72px;color:#262626;transform:scaleX(0.9631);transform-origin:0 0;">Modo de compatibilidad</div>
<div class="t tx" id="t9" style="left:637.50px;top:14.21px;font-size:9.6px;line-height:10.72px;color:#262626;transform:scaleX(0.8724);transform-origin:0 0;">Guardado en Este PC</div>
<div class="t tx" id="t10" style="left:346.30px;top:14.21px;font-size:9.6px;line-height:10.72px;color:#262626;transform:scaleX(0.999);transform-origin:0 0;">1</div>
<div class="t tx" id="t11" style="left:352.80px;top:14.21px;font-size:9.6px;line-height:10.72px;color:#262626;transform:scaleX(0.999);transform-origin:0 0;">T</div>
<div class="t tx" id="t12" style="left:519.80px;top:14.21px;font-size:9.6px;line-height:10.72px;color:#262626;transform:scaleX(0.999);transform-origin:0 0;">-</div>
<div class="t tx" id="t13" style="left:892.00px;top:14.42px;font-size:8.6px;line-height:9.61px;color:#ffffff;letter-spacing:-0.953px;">AD</div>
<div class="t tx" id="t14" style="left:7.00px;top:43.33px;font-size:9.8px;line-height:10.95px;color:#262626;letter-spacing:-0.195px;">Archivo</div>
<div class="t tx" id="t15" style="left:50.60px;top:43.33px;font-size:9.8px;line-height:10.95px;color:#262626;letter-spacing:0.105px;">Inicio</div>
<div class="t tx" id="t16" style="left:89.00px;top:43.33px;font-size:9.8px;line-height:10.95px;color:#262626;letter-spacing:-0.031px;">Insertar</div>
<div class="t tx" id="t17" style="left:138.00px;top:43.33px;font-size:9.8px;line-height:10.95px;color:#262626;letter-spacing:-0.008px;">Dibujar</div>
<div class="t tx" id="t18" style="left:185.50px;top:43.33px;font-size:9.8px;line-height:10.95px;color:#262626;letter-spacing:0.032px;">Disposición de página</div>
<div class="t tx" id="t19" style="left:298.50px;top:43.33px;font-size:9.8px;line-height:10.95px;color:#262626;letter-spacing:-0.192px;">Fórmulas</div>
<div class="t tx" id="t20" style="left:354.00px;top:43.33px;font-size:9.8px;line-height:10.95px;color:#262626;letter-spacing:-0.073px;">Datos</div>
<div class="t tx" id="t21" style="left:394.60px;top:43.33px;font-size:9.8px;line-height:10.95px;color:#262626;letter-spacing:-0.386px;">Revisar</div>
<div class="t tx" id="t22" style="left:440.80px;top:43.33px;font-size:9.8px;line-height:10.95px;color:#262626;letter-spacing:-0.277px;">Vista</div>
<div class="t tx" id="t23" style="left:478.30px;top:43.33px;font-size:9.8px;line-height:10.95px;color:#262626;letter-spacing:-0.028px;">Automatizar</div>
<div class="t tx" id="t24" style="left:547.60px;top:43.33px;font-size:9.8px;line-height:10.95px;color:#262626;letter-spacing:-0.102px;">Ayuda</div>
<div class="t tx" id="t25" style="left:877.50px;top:43.03px;font-size:9.8px;line-height:10.95px;color:#262626;letter-spacing:-0.155px;">Comentarios</div>
<div class="t tx" id="t26" style="left:959.00px;top:43.03px;font-size:9.8px;line-height:10.95px;color:#ffffff;letter-spacing:0.061px;">Compartir</div>
<div class="t tx" id="t27" style="left:18.20px;top:122.21px;font-size:8.5px;line-height:9.49px;color:#262626;letter-spacing:-0.027px;-webkit-text-stroke:0.15px currentColor;">Portapapeles</div>
<div class="t tx" id="t28" style="left:159.00px;top:122.21px;font-size:8.5px;line-height:9.49px;color:#262626;letter-spacing:0.026px;-webkit-text-stroke:0.15px currentColor;">Fuente</div>
<div class="t tx" id="t29" style="left:317.00px;top:122.21px;font-size:8.5px;line-height:9.49px;color:#262626;letter-spacing:0.141px;-webkit-text-stroke:0.15px currentColor;">Alineación</div>
<div class="t tx" id="t30" style="left:439.80px;top:122.21px;font-size:8.5px;line-height:9.49px;color:#262626;letter-spacing:-0.087px;-webkit-text-stroke:0.15px currentColor;">Número</div>
<div class="t tx" id="t31" style="left:558.80px;top:122.21px;font-size:8.5px;line-height:9.49px;color:#262626;letter-spacing:-0.141px;-webkit-text-stroke:0.15px currentColor;">Estilos</div>
<div class="t tx" id="t32" style="left:671.60px;top:122.21px;font-size:8.5px;line-height:9.49px;color:#262626;letter-spacing:-0.174px;-webkit-text-stroke:0.15px currentColor;">Celdas</div>
<div class="t tx" id="t33" style="left:788.80px;top:122.21px;font-size:8.5px;line-height:9.49px;color:#262626;letter-spacing:0.052px;-webkit-text-stroke:0.15px currentColor;">Edición</div>
<div class="t tx" id="t34" style="left:887.80px;top:122.21px;font-size:8.5px;line-height:9.49px;color:#262626;letter-spacing:0.021px;-webkit-text-stroke:0.15px currentColor;">Complementos</div>
<div class="t tx" id="t35" style="left:19.80px;top:91.99px;font-size:9.4px;line-height:10.50px;color:#b4b4b4;letter-spacing:-0.658px;">Pegar</div>
<div class="t tx" id="t36" style="left:98.30px;top:71.90px;font-size:9.5px;line-height:10.61px;color:#bcbcbc;letter-spacing:-0.329px;">Arial</div>
<div class="t tx" id="t37" style="left:100.80px;top:95.07px;font-size:10.2px;line-height:11.39px;color:#9a9a9a;font-weight:700;">N</div>
<div class="t tx" id="t38" style="left:120.30px;top:95.25px;font-size:10px;line-height:11.17px;color:#a4a4a4;font-style:italic;transform:scaleX(0.9);transform-origin:left;">K</div>
<div class="t tx" id="t39" style="left:141.20px;top:94.89px;font-size:10.4px;line-height:11.62px;color:#a4a4a4;transform:scaleX(0.78);transform-origin:left;">S</div>
<div class="t tx" id="t40" style="left:192.40px;top:72.54px;font-size:8.8px;line-height:9.83px;color:#bcbcbc;letter-spacing:-0.6px;">10</div>
<div class="t tx" id="t41" style="left:429.20px;top:66.46px;font-size:9px;line-height:10.05px;color:#bcbcbc;letter-spacing:-0.472px;">General</div>
<div class="t tx" id="t42" style="left:431.30px;top:82.58px;font-size:14.5px;line-height:16.20px;color:#a0a0a0;transform:scaleX(0.78);transform-origin:left;">$</div>
<div class="t tx" id="t43" style="left:460.50px;top:83.53px;font-size:14px;line-height:15.64px;color:#a0a0a0;transform:scaleX(0.95);transform-origin:left;">%</div>
<div class="t tx" id="t44" style="left:479.70px;top:87.35px;font-size:6.8px;line-height:7.60px;color:#a8a8a8;letter-spacing:0.328px;">000</div>
<div class="t tx" id="t45" style="left:525.20px;top:67.63px;font-size:8.7px;line-height:9.72px;color:#b4b4b4;letter-spacing:0.198px;">Formato condicional</div>
<div class="t tx" id="t46" style="left:525.20px;top:87.23px;font-size:8.7px;line-height:9.72px;color:#b4b4b4;letter-spacing:0.191px;">Dar formato como tabla</div>
<div class="t tx" id="t47" style="left:525.20px;top:106.93px;font-size:8.7px;line-height:9.72px;color:#b4b4b4;letter-spacing:-0.091px;">Estilos de celda</div>
<div class="t tx" id="t48" style="left:665.10px;top:67.53px;font-size:8.7px;line-height:9.72px;color:#b4b4b4;letter-spacing:-0.079px;">Insertar</div>
<div class="t tx" id="t49" style="left:665.10px;top:86.93px;font-size:8.7px;line-height:9.72px;color:#b4b4b4;letter-spacing:0.087px;">Eliminar</div>
<div class="t tx" id="t50" style="left:665.10px;top:105.73px;font-size:8.7px;line-height:9.72px;color:#b4b4b4;letter-spacing:0.157px;">Formato</div>
<div class="t tx" id="t51" style="left:773.10px;top:92.34px;font-size:8.8px;line-height:9.83px;color:#b4b4b4;letter-spacing:-0.028px;">Ordenar y</div>
<div class="t tx" id="t52" style="left:778.30px;top:103.84px;font-size:8.8px;line-height:9.83px;color:#b4b4b4;letter-spacing:0.206px;">filtrar</div>
<div class="t tx" id="t53" style="left:827.00px;top:92.24px;font-size:8.8px;line-height:9.83px;color:#2b2b2b;letter-spacing:-0.191px;">Buscar y</div>
<div class="t tx" id="t54" style="left:817.50px;top:104.14px;font-size:8.8px;line-height:9.83px;color:#2b2b2b;letter-spacing:-0.010px;">seleccionar</div>
<div class="t tx" id="t55" style="left:885.80px;top:92.24px;font-size:8.8px;line-height:9.83px;color:#b4b4b4;letter-spacing:0.157px;">Complementos</div>
<div class="t tx" id="t56" style="left:11.30px;top:144.67px;font-size:10.2px;line-height:11.39px;color:#262626;transform:scaleX(0.8720);transform-origin:0 0;">G37</div>
<div class="t tx" id="t57" style="left:173.80px;top:144.49px;font-size:10.4px;line-height:11.62px;color:#262626;transform:scaleX(0.8480);transform-origin:0 0;">DIRECTORA GENERAL DE ASUNTOS JURIDICOS</div>
<div class="t tx" id="t58" style="left:93.25px;top:504.75px;font-size:10px;line-height:11.17px;color:#262626;letter-spacing:0.490px;-webkit-text-stroke:0.45px currentColor;">Informacion</div>
<div class="t tx" id="t59" style="left:169.70px;top:506.65px;font-size:10px;line-height:11.17px;color:#303030;letter-spacing:0.118px;">hidden1</div>
<div class="t tx" id="t60" style="left:226.70px;top:506.65px;font-size:10px;line-height:11.17px;color:#303030;letter-spacing:0.268px;">hidden2</div>
<div class="t tx" id="t61" style="left:285.10px;top:506.65px;font-size:10px;line-height:11.17px;color:#303030;letter-spacing:-0.081px;">TABLA375280</div>
<div class="t tx" id="t62" style="left:370.10px;top:506.65px;font-size:10px;line-height:11.17px;color:#303030;letter-spacing:-0.131px;">TABLA375267</div>
<div class="t tx" id="t63" style="left:453.60px;top:506.65px;font-size:10px;line-height:11.17px;color:#303030;letter-spacing:-0.131px;">TABLA375281</div>
<div class="t tx" id="t64" style="left:536.90px;top:506.65px;font-size:10px;line-height:11.17px;color:#303030;letter-spacing:-0.809px;-webkit-mask-image:linear-gradient(90deg,#000 30%,transparent 100%);">TAB</div>
<div class="t tx" id="t65" style="left:8.80px;top:529.12px;font-size:8.6px;line-height:9.61px;color:#303030;letter-spacing:-0.239px;">Listo</div>
<div class="t tx" id="t66" style="left:55.30px;top:529.12px;font-size:8.6px;line-height:9.61px;color:#303030;letter-spacing:0.051px;">Accesibilidad: No disponible</div>
<div class="t tx" id="t67" style="left:735.60px;top:528.12px;font-size:8.6px;line-height:9.61px;color:#303030;letter-spacing:-0.120px;">Recuento: 52</div>
<div class="t tx" id="t68" style="left:997.20px;top:529.12px;font-size:8.6px;line-height:9.61px;color:#303030;letter-spacing:-0.202px;">71%</div>
<div class="t tx" id="t69" style="left:16.20px;top:488.91px;font-size:7.5px;line-height:8.38px;color:#141414;letter-spacing:-0.3px;-webkit-text-stroke:0.06px #000;">TURISMO</div>
<div class="t tx" id="t70" style="left:118.20px;top:191.91px;font-size:7.5px;line-height:8.38px;color:#141414;letter-spacing:-0.3px;-webkit-text-stroke:0.06px #000;">DIRECTOR DEL C2</div>
<div class="t tx" id="t71" style="left:118.20px;top:218.91px;font-size:7.5px;line-height:8.38px;color:#141414;letter-spacing:-0.3px;-webkit-text-stroke:0.06px #000;">DIRECTOR DE ASUNTOS INTERNOS</div>
<div class="t tx" id="t72" style="left:118.20px;top:245.91px;font-size:7.5px;line-height:8.38px;color:#141414;letter-spacing:-0.3px;-webkit-text-stroke:0.06px #000;">DIRECTORA GENERAL DE ASUNTOS JURIDICOS</div>
<div class="t tx" id="t73" style="left:118.20px;top:272.91px;font-size:7.5px;line-height:8.38px;color:#141414;letter-spacing:-0.3px;-webkit-text-stroke:0.06px #000;">DIRECTOR DE ASUNTOS JURIDICOS</div>
<div class="t tx" id="t74" style="left:118.20px;top:299.91px;font-size:7.5px;line-height:8.38px;color:#141414;letter-spacing:-0.3px;-webkit-text-stroke:0.06px #000;">DIRECTORA DE ASUNTOS CONSULTIVOS</div>
<div class="t tx" id="t75" style="left:118.20px;top:326.91px;font-size:7.5px;line-height:8.38px;color:#141414;letter-spacing:-0.3px;-webkit-text-stroke:0.06px #000;">DIRECTOR DE ASUNTOS CONTENCIOSOS</div>
<div class="t tx" id="t76" style="left:118.20px;top:353.91px;font-size:7.5px;line-height:8.38px;color:#141414;letter-spacing:-0.3px;-webkit-text-stroke:0.06px #000;">DIRECTOR GENERAL DE DESARROLLO SOCIAL</div>
<div class="t tx" id="t77" style="left:118.20px;top:380.91px;font-size:7.5px;line-height:8.38px;color:#141414;letter-spacing:-0.3px;-webkit-text-stroke:0.06px #000;">DIRECTORA DE SALUD</div>
<div class="t tx" id="t78" style="left:118.20px;top:407.91px;font-size:7.5px;line-height:8.38px;color:#141414;letter-spacing:-0.3px;-webkit-text-stroke:0.06px #000;">SECRETARIO TECNICO DE EDUCACION</div>
<div class="t tx" id="t79" style="left:118.20px;top:434.91px;font-size:7.5px;line-height:8.38px;color:#141414;letter-spacing:-0.3px;-webkit-text-stroke:0.06px #000;">DIRECTOR DE PARTICIPACION CIUDADANA</div>
<div class="t tx" id="t80" style="left:118.20px;top:461.91px;font-size:7.5px;line-height:8.38px;color:#141414;letter-spacing:-0.3px;-webkit-text-stroke:0.06px #000;">DIRECTOR DE PROGRAMAS SOCIALES</div>
<div class="t tx" id="t81" style="left:118.20px;top:488.91px;font-size:7.5px;line-height:8.38px;color:#141414;letter-spacing:-0.3px;-webkit-text-stroke:0.06px #000;">DIRECTOR GENERAL DE DESARROLLO ECONOMICO Y TURISMO</div>
<div class="t tx" id="t82" style="left:387.20px;top:191.91px;font-size:7.5px;line-height:8.38px;color:#141414;letter-spacing:-0.3px;-webkit-text-stroke:0.06px #000;">DIRECCION DE CONTROL Y COMANDO</div>
<div class="t tx" id="t83" style="left:387.20px;top:218.91px;font-size:7.5px;line-height:8.38px;color:#141414;letter-spacing:-0.3px;-webkit-text-stroke:0.06px #000;">DIRECCION DE LA UNIDAD DE ASUNTOS INTERNOS</div>
<div class="t tx" id="t84" style="left:387.20px;top:245.91px;font-size:7.5px;line-height:8.38px;color:#141414;letter-spacing:-0.3px;-webkit-text-stroke:0.06px #000;">DIRECCION GENERAL DE ASUNTOS JURIDICOS</div>
<div class="t tx" id="t85" style="left:387.20px;top:272.91px;font-size:7.5px;line-height:8.38px;color:#141414;letter-spacing:-0.3px;-webkit-text-stroke:0.06px #000;">DIRECCION DE ASUNTOS JURIDICOS</div>
<div class="t tx" id="t86" style="left:387.20px;top:299.91px;font-size:7.5px;line-height:8.38px;color:#141414;letter-spacing:-0.3px;-webkit-text-stroke:0.06px #000;">DIRECCION DE ASUNTOS CONSULTIVOS</div>
<div class="t tx" id="t87" style="left:387.20px;top:326.91px;font-size:7.5px;line-height:8.38px;color:#141414;letter-spacing:-0.3px;-webkit-text-stroke:0.06px #000;">DIRECCION DE ASUNTOS CONTENCIOSOS</div>
<div class="t tx" id="t88" style="left:387.20px;top:353.91px;font-size:7.5px;line-height:8.38px;color:#141414;letter-spacing:-0.3px;-webkit-text-stroke:0.06px #000;">DIRECCION GENERAL DE DESARROLLO SOCIAL</div>
<div class="t tx" id="t89" style="left:387.20px;top:380.91px;font-size:7.5px;line-height:8.38px;color:#141414;letter-spacing:-0.3px;-webkit-text-stroke:0.06px #000;">DIRECCION DE SALUD</div>
<div class="t tx" id="t90" style="left:387.20px;top:407.91px;font-size:7.5px;line-height:8.38px;color:#141414;letter-spacing:-0.3px;-webkit-text-stroke:0.06px #000;">DIRECCION DE EDUCACION</div>
<div class="t tx" id="t91" style="left:387.20px;top:434.91px;font-size:7.5px;line-height:8.38px;color:#141414;letter-spacing:-0.3px;-webkit-text-stroke:0.06px #000;">DIRECCION DE PARTICIPACION CIUDADANA</div>
<div class="t tx" id="t92" style="left:387.20px;top:461.91px;font-size:7.5px;line-height:8.38px;color:#141414;letter-spacing:-0.3px;-webkit-text-stroke:0.06px #000;">DIRECCION DE PROGRAMAS SOCIALES</div>
<div class="t tx" id="t93" style="left:387.20px;top:488.91px;font-size:7.5px;line-height:8.38px;color:#141414;letter-spacing:-0.3px;-webkit-text-stroke:0.06px #000;">DIRECCION GENERAL DESARROLLO ECONOMICO Y TURISMO</div>
<div class="t tx" id="t94" style="left:728.20px;top:191.91px;font-size:7.5px;line-height:8.38px;color:#141414;letter-spacing:-0.3px;-webkit-text-stroke:0.06px #000;">DARVI AMADO</div>
<div class="t tx" id="t95" style="left:728.20px;top:218.91px;font-size:7.5px;line-height:8.38px;color:#141414;letter-spacing:-0.3px;-webkit-text-stroke:0.06px #000;">ULISES GIOVANI</div>
<div class="t tx" id="t96" style="left:728.20px;top:245.91px;font-size:7.5px;line-height:8.38px;color:#141414;letter-spacing:-0.3px;-webkit-text-stroke:0.06px #000;">ALIX YAJAIRA</div>
<div class="t tx" id="t97" style="left:728.20px;top:272.91px;font-size:7.5px;line-height:8.38px;color:#141414;letter-spacing:-0.3px;-webkit-text-stroke:0.06px #000;">SALVADOR</div>
<div class="t tx" id="t98" style="left:728.20px;top:299.91px;font-size:7.5px;line-height:8.38px;color:#141414;letter-spacing:-0.3px;-webkit-text-stroke:0.06px #000;">SHAILA</div>
<div class="t tx" id="t99" style="left:728.20px;top:326.91px;font-size:7.5px;line-height:8.38px;color:#141414;letter-spacing:-0.3px;-webkit-text-stroke:0.06px #000;">GREGORIO ALEJANDRO</div>
<div class="t tx" id="t100" style="left:728.20px;top:353.91px;font-size:7.5px;line-height:8.38px;color:#141414;letter-spacing:-0.3px;-webkit-text-stroke:0.06px #000;">EYDER JAHIL</div>
<div class="t tx" id="t101" style="left:728.20px;top:380.91px;font-size:7.5px;line-height:8.38px;color:#141414;letter-spacing:-0.3px;-webkit-text-stroke:0.06px #000;">MARIA TERESA</div>
<div class="t tx" id="t102" style="left:728.20px;top:407.91px;font-size:7.5px;line-height:8.38px;color:#141414;letter-spacing:-0.3px;-webkit-text-stroke:0.06px #000;">LAUREANO EBRAIN</div>
<div class="t tx" id="t103" style="left:728.20px;top:434.91px;font-size:7.5px;line-height:8.38px;color:#141414;letter-spacing:-0.3px;-webkit-text-stroke:0.06px #000;">ELIO ROGER</div>
<div class="t tx" id="t104" style="left:728.20px;top:461.91px;font-size:7.5px;line-height:8.38px;color:#141414;letter-spacing:-0.3px;-webkit-text-stroke:0.06px #000;">EDVIN JOEL</div>
<div class="t tx" id="t105" style="left:728.20px;top:488.91px;font-size:7.5px;line-height:8.38px;color:#141414;letter-spacing:-0.3px;-webkit-text-stroke:0.06px #000;">EDGAR HUMBERTO</div>
<div class="t tx" id="t106" style="left:813.20px;top:191.91px;font-size:7.5px;line-height:8.38px;color:#141414;letter-spacing:-0.3px;-webkit-text-stroke:0.06px #000;">ORDOÑEZ</div>
<div class="t tx" id="t107" style="left:813.20px;top:218.91px;font-size:7.5px;line-height:8.38px;color:#141414;letter-spacing:-0.3px;-webkit-text-stroke:0.06px #000;">MALDONADO</div>
<div class="t tx" id="t108" style="left:813.20px;top:245.91px;font-size:7.5px;line-height:8.38px;color:#141414;letter-spacing:-0.3px;-webkit-text-stroke:0.06px #000;">TORRES</div>
<div class="t tx" id="t109" style="left:813.20px;top:272.91px;font-size:7.5px;line-height:8.38px;color:#141414;letter-spacing:-0.3px;-webkit-text-stroke:0.06px #000;">GARCIA</div>
<div class="t tx" id="t110" style="left:813.20px;top:299.91px;font-size:7.5px;line-height:8.38px;color:#141414;letter-spacing:-0.3px;-webkit-text-stroke:0.06px #000;">SALGADO</div>
<div class="t tx" id="t111" style="left:813.20px;top:326.91px;font-size:7.5px;line-height:8.38px;color:#141414;letter-spacing:-0.3px;-webkit-text-stroke:0.06px #000;">EUROZA</div>
<div class="t tx" id="t112" style="left:813.20px;top:353.91px;font-size:7.5px;line-height:8.38px;color:#141414;letter-spacing:-0.3px;-webkit-text-stroke:0.06px #000;">HOTH</div>
<div class="t tx" id="t113" style="left:813.20px;top:380.91px;font-size:7.5px;line-height:8.38px;color:#141414;letter-spacing:-0.3px;-webkit-text-stroke:0.06px #000;">GOMEZ</div>
<div class="t tx" id="t114" style="left:813.20px;top:407.91px;font-size:7.5px;line-height:8.38px;color:#141414;letter-spacing:-0.3px;-webkit-text-stroke:0.06px #000;">CHULIN</div>
<div class="t tx" id="t115" style="left:813.20px;top:434.91px;font-size:7.5px;line-height:8.38px;color:#141414;letter-spacing:-0.3px;-webkit-text-stroke:0.06px #000;">ARGUELLES</div>
<div class="t tx" id="t116" style="left:813.20px;top:461.91px;font-size:7.5px;line-height:8.38px;color:#141414;letter-spacing:-0.3px;-webkit-text-stroke:0.06px #000;">MAGAÑA</div>
<div class="t tx" id="t117" style="left:813.20px;top:488.91px;font-size:7.5px;line-height:8.38px;color:#141414;letter-spacing:-0.3px;-webkit-text-stroke:0.06px #000;">GASCA</div>
<div class="t tx" id="t118" style="left:873.20px;top:191.91px;font-size:7.5px;line-height:8.38px;color:#141414;letter-spacing:-0.3px;-webkit-text-stroke:0.06px #000;">AVILES</div>
<div class="t tx" id="t119" style="left:873.20px;top:218.91px;font-size:7.5px;line-height:8.38px;color:#141414;letter-spacing:-0.3px;-webkit-text-stroke:0.06px #000;">SANTOS</div>
<div class="t tx" id="t120" style="left:873.20px;top:245.91px;font-size:7.5px;line-height:8.38px;color:#141414;letter-spacing:-0.3px;-webkit-text-stroke:0.06px #000;">PAT</div>
<div class="t tx" id="t121" style="left:873.20px;top:272.91px;font-size:7.5px;line-height:8.38px;color:#141414;letter-spacing:-0.3px;-webkit-text-stroke:0.06px #000;">MARTINEZ</div>
<div class="t tx" id="t122" style="left:873.20px;top:299.91px;font-size:7.5px;line-height:8.38px;color:#141414;letter-spacing:-0.3px;-webkit-text-stroke:0.06px #000;">ARREGUIN</div>
<div class="t tx" id="t123" style="left:873.20px;top:326.91px;font-size:7.5px;line-height:8.38px;color:#141414;letter-spacing:-0.3px;-webkit-text-stroke:0.06px #000;">AVILA</div>
<div class="t tx" id="t124" style="left:873.20px;top:353.91px;font-size:7.5px;line-height:8.38px;color:#141414;letter-spacing:-0.3px;-webkit-text-stroke:0.06px #000;">PEREZ</div>
<div class="t tx" id="t125" style="left:873.20px;top:380.91px;font-size:7.5px;line-height:8.38px;color:#141414;letter-spacing:-0.3px;-webkit-text-stroke:0.06px #000;">HERRERA</div>
<div class="t tx" id="t126" style="left:873.20px;top:407.91px;font-size:7.5px;line-height:8.38px;color:#141414;letter-spacing:-0.3px;-webkit-text-stroke:0.06px #000;">UC</div>
<div class="t tx" id="t127" style="left:873.20px;top:434.91px;font-size:7.5px;line-height:8.38px;color:#141414;letter-spacing:-0.3px;-webkit-text-stroke:0.06px #000;">SULUB</div>
<div class="t tx" id="t128" style="left:873.20px;top:461.91px;font-size:7.5px;line-height:8.38px;color:#141414;letter-spacing:-0.3px;-webkit-text-stroke:0.06px #000;">CASTRO</div>
<div class="t tx" id="t129" style="left:873.20px;top:488.91px;font-size:7.5px;line-height:8.38px;color:#141414;letter-spacing:-0.3px;-webkit-text-stroke:0.06px #000;">ARCEO</div>
<div class="t tx" id="t130" style="left:941.20px;top:191.91px;font-size:7.5px;line-height:8.38px;color:#141414;letter-spacing:-0.3px;-webkit-text-stroke:0.06px #000;">Hombre</div>
<div class="t tx" id="t131" style="left:941.20px;top:218.91px;font-size:7.5px;line-height:8.38px;color:#141414;letter-spacing:-0.3px;-webkit-text-stroke:0.06px #000;">Hombre</div>
<div class="t tx" id="t132" style="left:941.20px;top:245.91px;font-size:7.5px;line-height:8.38px;color:#141414;letter-spacing:-0.3px;-webkit-text-stroke:0.06px #000;">Mujer</div>
<div class="t tx" id="t133" style="left:941.20px;top:272.91px;font-size:7.5px;line-height:8.38px;color:#141414;letter-spacing:-0.3px;-webkit-text-stroke:0.06px #000;">Hombre</div>
<div class="t tx" id="t134" style="left:941.20px;top:299.91px;font-size:7.5px;line-height:8.38px;color:#141414;letter-spacing:-0.3px;-webkit-text-stroke:0.06px #000;">Mujer</div>
<div class="t tx" id="t135" style="left:941.20px;top:326.91px;font-size:7.5px;line-height:8.38px;color:#141414;letter-spacing:-0.3px;-webkit-text-stroke:0.06px #000;">Hombre</div>
<div class="t tx" id="t136" style="left:941.20px;top:353.91px;font-size:7.5px;line-height:8.38px;color:#141414;letter-spacing:-0.3px;-webkit-text-stroke:0.06px #000;">Hombre</div>
<div class="t tx" id="t137" style="left:941.20px;top:380.91px;font-size:7.5px;line-height:8.38px;color:#141414;letter-spacing:-0.3px;-webkit-text-stroke:0.06px #000;">Mujer</div>
<div class="t tx" id="t138" style="left:941.20px;top:407.91px;font-size:7.5px;line-height:8.38px;color:#141414;letter-spacing:-0.3px;-webkit-text-stroke:0.06px #000;">Hombre</div>
<div class="t tx" id="t139" style="left:941.20px;top:434.91px;font-size:7.5px;line-height:8.38px;color:#141414;letter-spacing:-0.3px;-webkit-text-stroke:0.06px #000;">Hombre</div>
<div class="t tx" id="t140" style="left:941.20px;top:461.91px;font-size:7.5px;line-height:8.38px;color:#141414;letter-spacing:-0.3px;-webkit-text-stroke:0.06px #000;">Hombre</div>
<div class="t tx" id="t141" style="left:941.20px;top:488.91px;font-size:7.5px;line-height:8.38px;color:#141414;letter-spacing:-0.3px;-webkit-text-stroke:0.06px #000;">Hombre</div>
<div class="t tx" id="t142" style="left:1004.20px;top:191.91px;font-size:7.5px;line-height:8.38px;color:#141414;letter-spacing:-0.3px;-webkit-text-stroke:0.06px #000;width:3.8px;overflow:hidden;">8</div>
<div class="t tx" id="t143" style="left:1004.20px;top:218.91px;font-size:7.5px;line-height:8.38px;color:#141414;letter-spacing:-0.3px;-webkit-text-stroke:0.06px #000;width:3.8px;overflow:hidden;">8</div>
<div class="t tx" id="t144" style="left:1004.20px;top:245.91px;font-size:7.5px;line-height:8.38px;color:#141414;letter-spacing:-0.3px;-webkit-text-stroke:0.06px #000;width:3.8px;overflow:hidden;">10</div>
<div class="t tx" id="t145" style="left:1004.20px;top:272.91px;font-size:7.5px;line-height:8.38px;color:#141414;letter-spacing:-0.3px;-webkit-text-stroke:0.06px #000;width:3.8px;overflow:hidden;">8</div>
<div class="t tx" id="t146" style="left:1004.20px;top:299.91px;font-size:7.5px;line-height:8.38px;color:#141414;letter-spacing:-0.3px;-webkit-text-stroke:0.06px #000;width:3.8px;overflow:hidden;">8</div>
<div class="t tx" id="t147" style="left:1004.20px;top:326.91px;font-size:7.5px;line-height:8.38px;color:#141414;letter-spacing:-0.3px;-webkit-text-stroke:0.06px #000;width:3.8px;overflow:hidden;">8</div>
<div class="t tx" id="t148" style="left:1004.20px;top:353.91px;font-size:7.5px;line-height:8.38px;color:#141414;letter-spacing:-0.3px;-webkit-text-stroke:0.06px #000;width:3.8px;overflow:hidden;">10</div>
<div class="t tx" id="t149" style="left:1004.20px;top:380.91px;font-size:7.5px;line-height:8.38px;color:#141414;letter-spacing:-0.3px;-webkit-text-stroke:0.06px #000;width:3.8px;overflow:hidden;">8</div>
<div class="t tx" id="t150" style="left:1004.20px;top:407.91px;font-size:7.5px;line-height:8.38px;color:#141414;letter-spacing:-0.3px;-webkit-text-stroke:0.06px #000;width:3.8px;overflow:hidden;">8</div>
<div class="t tx" id="t151" style="left:1004.20px;top:434.91px;font-size:7.5px;line-height:8.38px;color:#141414;letter-spacing:-0.3px;-webkit-text-stroke:0.06px #000;width:3.8px;overflow:hidden;">8</div>
<div class="t tx" id="t152" style="left:1004.20px;top:461.91px;font-size:7.5px;line-height:8.38px;color:#141414;letter-spacing:-0.3px;-webkit-text-stroke:0.06px #000;width:3.8px;overflow:hidden;">8</div>
<div class="t tx" id="t153" style="left:1004.20px;top:488.91px;font-size:7.5px;line-height:8.38px;color:#141414;letter-spacing:-0.3px;-webkit-text-stroke:0.06px #000;width:3.8px;overflow:hidden;">8</div>
<div class="t tx" id="t154" style="left:247.90px;top:165.22px;font-size:7.6px;line-height:8.49px;color:#217346;-webkit-text-stroke:0.15px currentColor;">H</div>
<div class="t tx" id="t155" style="left:552.90px;top:165.22px;font-size:7.6px;line-height:8.49px;color:#217346;-webkit-text-stroke:0.15px currentColor;">I</div>
<div class="t tx" id="t156" style="left:765.90px;top:165.22px;font-size:7.6px;line-height:8.49px;color:#217346;-webkit-text-stroke:0.15px currentColor;">J</div>
<div class="t tx" id="t157" style="left:838.40px;top:165.22px;font-size:7.6px;line-height:8.49px;color:#217346;-webkit-text-stroke:0.15px currentColor;">K</div>
<div class="t tx" id="t158" style="left:902.40px;top:165.22px;font-size:7.6px;line-height:8.49px;color:#217346;-webkit-text-stroke:0.15px currentColor;">L</div>
<div class="t tx" id="t159" style="left:967.90px;top:165.22px;font-size:7.6px;line-height:8.49px;color:#217346;-webkit-text-stroke:0.15px currentColor;">M</div>
<div class="t tx" id="t160" style="left:3.80px;top:192.26px;font-size:7px;line-height:7.82px;color:#505050;letter-spacing:-0.1px;-webkit-text-stroke:0.08px currentColor;">35</div>
<div class="t tx" id="t161" style="left:3.80px;top:219.26px;font-size:7px;line-height:7.82px;color:#505050;letter-spacing:-0.1px;-webkit-text-stroke:0.08px currentColor;">36</div>
<div class="t tx" id="t162" style="left:3.80px;top:246.26px;font-size:7px;line-height:7.82px;color:#217346;letter-spacing:-0.1px;-webkit-text-stroke:0.08px currentColor;">37</div>
<div class="t tx" id="t163" style="left:3.80px;top:273.26px;font-size:7px;line-height:7.82px;color:#217346;letter-spacing:-0.1px;-webkit-text-stroke:0.08px currentColor;">38</div>
<div class="t tx" id="t164" style="left:3.80px;top:300.26px;font-size:7px;line-height:7.82px;color:#217346;letter-spacing:-0.1px;-webkit-text-stroke:0.08px currentColor;">39</div>
<div class="t tx" id="t165" style="left:3.80px;top:327.26px;font-size:7px;line-height:7.82px;color:#217346;letter-spacing:-0.1px;-webkit-text-stroke:0.08px currentColor;">40</div>
<div class="t tx" id="t166" style="left:3.80px;top:354.26px;font-size:7px;line-height:7.82px;color:#505050;letter-spacing:-0.1px;-webkit-text-stroke:0.08px currentColor;">41</div>
<div class="t tx" id="t167" style="left:3.80px;top:381.26px;font-size:7px;line-height:7.82px;color:#505050;letter-spacing:-0.1px;-webkit-text-stroke:0.08px currentColor;">42</div>
<div class="t tx" id="t168" style="left:3.80px;top:408.26px;font-size:7px;line-height:7.82px;color:#505050;letter-spacing:-0.1px;-webkit-text-stroke:0.08px currentColor;">43</div>
<div class="t tx" id="t169" style="left:3.80px;top:435.26px;font-size:7px;line-height:7.82px;color:#505050;letter-spacing:-0.1px;-webkit-text-stroke:0.08px currentColor;">44</div>
<div class="t tx" id="t170" style="left:3.80px;top:462.26px;font-size:7px;line-height:7.82px;color:#505050;letter-spacing:-0.1px;-webkit-text-stroke:0.08px currentColor;">45</div>
<div class="t tx" id="t171" style="left:3.80px;top:489.26px;font-size:7px;line-height:7.82px;color:#505050;letter-spacing:-0.1px;-webkit-text-stroke:0.08px currentColor;">46</div>
</body></html>
